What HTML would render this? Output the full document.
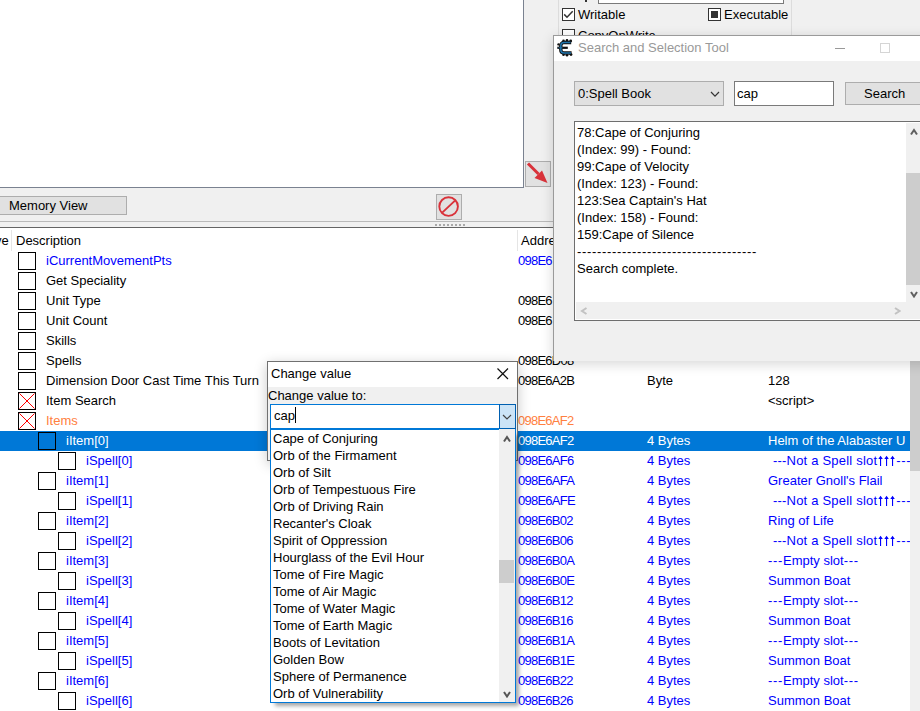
<!DOCTYPE html><html><head><meta charset="utf-8"><style>
*{margin:0;padding:0;box-sizing:border-box}
html,body{width:920px;height:711px;overflow:hidden;background:#f0f0f0;font-family:"Liberation Sans",sans-serif;font-size:13px;color:#000}
.a{position:absolute}
.t{position:absolute;white-space:nowrap;line-height:20px;height:20px}
.l{position:absolute;white-space:nowrap;line-height:17px;height:17px}
.cb{position:absolute;width:18px;height:18px;border:1px solid #000;background:#fff}
.bl{color:#0000ff}
.btn{position:absolute;background:#e1e1e1;border:1px solid #adadad}
</style></head><body>
<div class="a" style="left:0;top:0;width:524px;height:188px;background:#fff;border-right:1px solid #7a8290;border-bottom:1px solid #7a8290"></div>
<div class="btn" style="left:525px;top:161px;width:26px;height:26px"><svg class="a" style="left:0;top:0" width="24" height="24" viewBox="0 0 24 24"><path d="M2 1.5 L12.5 12" stroke="#d9323a" stroke-width="3"/><path d="M8.5 16 L16 8.5 L21.5 21 Z" fill="#d9323a"/></svg></div>
<div class="btn" style="left:-2px;top:196px;width:129px;height:19px"></div>
<div class="t" style="left:9px;top:196px">Memory View</div>
<div class="btn" style="left:436px;top:194px;width:26px;height:26px"><svg class="a" style="left:0;top:0" width="24" height="24" viewBox="0 0 24 24"><circle cx="11.6" cy="11.6" r="9.3" fill="none" stroke="#d9323a" stroke-width="1.9"/><path d="M5.2 17.6 L18 5.6" stroke="#d9323a" stroke-width="1.9"/></svg></div>
<div class="a" style="left:0;top:221px;width:554px;height:1px;background:#b9b9b9"></div>
<div class="a" style="left:435px;top:224px;width:30px;height:2px;background:repeating-linear-gradient(90deg,#a8a8a8 0 2px,transparent 2px 4px)"></div>
<div class="a" style="left:0;top:227px;width:920px;height:1px;background:#646464"></div>
<div class="a" style="left:0;top:228px;width:920px;height:483px;background:#fff"></div>
<div class="a" style="left:11px;top:230px;width:1px;height:21px;background:#e5e5e5"></div>
<div class="a" style="left:517px;top:230px;width:1px;height:21px;background:#e5e5e5"></div>
<div class="t" style="left:-5px;top:231px">ve</div>
<div class="t" style="left:16px;top:231px">Description</div>
<div class="t" style="left:521px;top:231px">Address</div>
<div class="cb" style="left:18px;top:252px;background:#fff"></div>
<div class="t" style="left:46px;top:251px;color:#0000ff">iCurrentMovementPts</div>
<div class="t" style="left:518px;top:251px;color:#0000ff;letter-spacing:-0.75px">098E6</div>
<div class="cb" style="left:18px;top:272px;background:#fff"></div>
<div class="t" style="left:46px;top:271px;color:#000">Get Speciality</div>
<div class="cb" style="left:18px;top:292px;background:#fff"></div>
<div class="t" style="left:46px;top:291px;color:#000">Unit Type</div>
<div class="t" style="left:518px;top:291px;color:#000;letter-spacing:-0.75px">098E6</div>
<div class="cb" style="left:18px;top:312px;background:#fff"></div>
<div class="t" style="left:46px;top:311px;color:#000">Unit Count</div>
<div class="t" style="left:518px;top:311px;color:#000;letter-spacing:-0.75px">098E6</div>
<div class="cb" style="left:18px;top:332px;background:#fff"></div>
<div class="t" style="left:46px;top:331px;color:#000">Skills</div>
<div class="cb" style="left:18px;top:352px;background:#fff"></div>
<div class="t" style="left:46px;top:351px;color:#000">Spells</div>
<div class="t" style="left:518px;top:351px;color:#000;letter-spacing:-0.75px">098E6D08</div>
<div class="cb" style="left:18px;top:372px;background:#fff"></div>
<div class="t" style="left:46px;top:371px;color:#000">Dimension Door Cast Time This Turn</div>
<div class="t" style="left:518px;top:371px;color:#000;letter-spacing:-0.75px">098E6A2B</div>
<div class="t" style="left:647px;top:371px;color:#000">Byte</div>
<div class="t" style="left:768px;top:371px;color:#000">128</div>
<div class="cb" style="left:18px;top:392px;background:#fff"><svg class="a" style="left:0;top:0" width="16" height="16"><path d="M0.5 0.5 L15.5 15.5 M15.5 0.5 L0.5 15.5" stroke="#ff0000" stroke-width="1"/></svg></div>
<div class="t" style="left:46px;top:391px;color:#000">Item Search</div>
<div class="t" style="left:768px;top:391px;color:#000">&lt;script&gt;</div>
<div class="cb" style="left:18px;top:412px;background:#fff"><svg class="a" style="left:0;top:0" width="16" height="16"><path d="M0.5 0.5 L15.5 15.5 M15.5 0.5 L0.5 15.5" stroke="#ff0000" stroke-width="1"/></svg></div>
<div class="t" style="left:46px;top:411px;color:#ff8040">Items</div>
<div class="t" style="left:518px;top:411px;color:#ff8040;letter-spacing:-0.75px">098E6AF2</div>
<div class="a" style="left:0;top:431px;width:910px;height:20px;background:#0078d7"></div>
<div class="cb" style="left:38px;top:432px;background:#0078d7"></div>
<div class="t" style="left:66px;top:431px;color:#fff">iItem[0]</div>
<div class="t" style="left:518px;top:431px;color:#fff;letter-spacing:-0.75px">098E6AF2</div>
<div class="t" style="left:647px;top:431px;color:#fff">4 Bytes</div>
<div class="t" style="left:768px;top:431px;color:#fff">Helm of the Alabaster U</div>
<div class="cb" style="left:58px;top:452px;background:#fff"></div>
<div class="t" style="left:86px;top:451px;color:#0000ff">iSpell[0]</div>
<div class="t" style="left:518px;top:451px;color:#0000ff;letter-spacing:-0.75px">098E6AF6</div>
<div class="t" style="left:647px;top:451px;color:#0000ff">4 Bytes</div>
<div class="t" style="left:773px;top:451px;color:#0000ff"><span style="letter-spacing:0.2px">---Not a Spell slot</span><svg style="display:inline-block;vertical-align:top;margin-top:4px" width="19" height="12" viewBox="0 0 19 12"><g fill="#0000ff" stroke="none"><rect x="3" y="2" width="1.1" height="9"/><rect x="9" y="2" width="1.1" height="9"/><rect x="15" y="2" width="1.1" height="9"/><path d="M1.3 4 L3.55 0.8 L5.8 4 Z M7.3 4 L9.55 0.8 L11.8 4 Z M13.3 4 L15.55 0.8 L17.8 4 Z"/></g></svg><span style="letter-spacing:0.67px">---</span></div>
<div class="cb" style="left:38px;top:472px;background:#fff"></div>
<div class="t" style="left:66px;top:471px;color:#0000ff">iItem[1]</div>
<div class="t" style="left:518px;top:471px;color:#0000ff;letter-spacing:-0.75px">098E6AFA</div>
<div class="t" style="left:647px;top:471px;color:#0000ff">4 Bytes</div>
<div class="t" style="left:768px;top:471px;color:#0000ff">Greater Gnoll's Flail</div>
<div class="cb" style="left:58px;top:492px;background:#fff"></div>
<div class="t" style="left:86px;top:491px;color:#0000ff">iSpell[1]</div>
<div class="t" style="left:518px;top:491px;color:#0000ff;letter-spacing:-0.75px">098E6AFE</div>
<div class="t" style="left:647px;top:491px;color:#0000ff">4 Bytes</div>
<div class="t" style="left:773px;top:491px;color:#0000ff"><span style="letter-spacing:0.2px">---Not a Spell slot</span><svg style="display:inline-block;vertical-align:top;margin-top:4px" width="19" height="12" viewBox="0 0 19 12"><g fill="#0000ff" stroke="none"><rect x="3" y="2" width="1.1" height="9"/><rect x="9" y="2" width="1.1" height="9"/><rect x="15" y="2" width="1.1" height="9"/><path d="M1.3 4 L3.55 0.8 L5.8 4 Z M7.3 4 L9.55 0.8 L11.8 4 Z M13.3 4 L15.55 0.8 L17.8 4 Z"/></g></svg><span style="letter-spacing:0.67px">---</span></div>
<div class="cb" style="left:38px;top:512px;background:#fff"></div>
<div class="t" style="left:66px;top:511px;color:#0000ff">iItem[2]</div>
<div class="t" style="left:518px;top:511px;color:#0000ff;letter-spacing:-0.75px">098E6B02</div>
<div class="t" style="left:647px;top:511px;color:#0000ff">4 Bytes</div>
<div class="t" style="left:768px;top:511px;color:#0000ff">Ring of Life</div>
<div class="cb" style="left:58px;top:532px;background:#fff"></div>
<div class="t" style="left:86px;top:531px;color:#0000ff">iSpell[2]</div>
<div class="t" style="left:518px;top:531px;color:#0000ff;letter-spacing:-0.75px">098E6B06</div>
<div class="t" style="left:647px;top:531px;color:#0000ff">4 Bytes</div>
<div class="t" style="left:773px;top:531px;color:#0000ff"><span style="letter-spacing:0.2px">---Not a Spell slot</span><svg style="display:inline-block;vertical-align:top;margin-top:4px" width="19" height="12" viewBox="0 0 19 12"><g fill="#0000ff" stroke="none"><rect x="3" y="2" width="1.1" height="9"/><rect x="9" y="2" width="1.1" height="9"/><rect x="15" y="2" width="1.1" height="9"/><path d="M1.3 4 L3.55 0.8 L5.8 4 Z M7.3 4 L9.55 0.8 L11.8 4 Z M13.3 4 L15.55 0.8 L17.8 4 Z"/></g></svg><span style="letter-spacing:0.67px">---</span></div>
<div class="cb" style="left:38px;top:552px;background:#fff"></div>
<div class="t" style="left:66px;top:551px;color:#0000ff">iItem[3]</div>
<div class="t" style="left:518px;top:551px;color:#0000ff;letter-spacing:-0.75px">098E6B0A</div>
<div class="t" style="left:647px;top:551px;color:#0000ff">4 Bytes</div>
<div class="t" style="left:768px;top:551px;color:#0000ff"><span style="letter-spacing:0.67px">---</span>Empty slot<span style="letter-spacing:0.67px">---</span></div>
<div class="cb" style="left:58px;top:572px;background:#fff"></div>
<div class="t" style="left:86px;top:571px;color:#0000ff">iSpell[3]</div>
<div class="t" style="left:518px;top:571px;color:#0000ff;letter-spacing:-0.75px">098E6B0E</div>
<div class="t" style="left:647px;top:571px;color:#0000ff">4 Bytes</div>
<div class="t" style="left:768px;top:571px;color:#0000ff">Summon Boat</div>
<div class="cb" style="left:38px;top:592px;background:#fff"></div>
<div class="t" style="left:66px;top:591px;color:#0000ff">iItem[4]</div>
<div class="t" style="left:518px;top:591px;color:#0000ff;letter-spacing:-0.75px">098E6B12</div>
<div class="t" style="left:647px;top:591px;color:#0000ff">4 Bytes</div>
<div class="t" style="left:768px;top:591px;color:#0000ff"><span style="letter-spacing:0.67px">---</span>Empty slot<span style="letter-spacing:0.67px">---</span></div>
<div class="cb" style="left:58px;top:612px;background:#fff"></div>
<div class="t" style="left:86px;top:611px;color:#0000ff">iSpell[4]</div>
<div class="t" style="left:518px;top:611px;color:#0000ff;letter-spacing:-0.75px">098E6B16</div>
<div class="t" style="left:647px;top:611px;color:#0000ff">4 Bytes</div>
<div class="t" style="left:768px;top:611px;color:#0000ff">Summon Boat</div>
<div class="cb" style="left:38px;top:632px;background:#fff"></div>
<div class="t" style="left:66px;top:631px;color:#0000ff">iItem[5]</div>
<div class="t" style="left:518px;top:631px;color:#0000ff;letter-spacing:-0.75px">098E6B1A</div>
<div class="t" style="left:647px;top:631px;color:#0000ff">4 Bytes</div>
<div class="t" style="left:768px;top:631px;color:#0000ff"><span style="letter-spacing:0.67px">---</span>Empty slot<span style="letter-spacing:0.67px">---</span></div>
<div class="cb" style="left:58px;top:652px;background:#fff"></div>
<div class="t" style="left:86px;top:651px;color:#0000ff">iSpell[5]</div>
<div class="t" style="left:518px;top:651px;color:#0000ff;letter-spacing:-0.75px">098E6B1E</div>
<div class="t" style="left:647px;top:651px;color:#0000ff">4 Bytes</div>
<div class="t" style="left:768px;top:651px;color:#0000ff">Summon Boat</div>
<div class="cb" style="left:38px;top:672px;background:#fff"></div>
<div class="t" style="left:66px;top:671px;color:#0000ff">iItem[6]</div>
<div class="t" style="left:518px;top:671px;color:#0000ff;letter-spacing:-0.75px">098E6B22</div>
<div class="t" style="left:647px;top:671px;color:#0000ff">4 Bytes</div>
<div class="t" style="left:768px;top:671px;color:#0000ff"><span style="letter-spacing:0.67px">---</span>Empty slot<span style="letter-spacing:0.67px">---</span></div>
<div class="cb" style="left:58px;top:692px;background:#fff"></div>
<div class="t" style="left:86px;top:691px;color:#0000ff">iSpell[6]</div>
<div class="t" style="left:518px;top:691px;color:#0000ff;letter-spacing:-0.75px">098E6B26</div>
<div class="t" style="left:647px;top:691px;color:#0000ff">4 Bytes</div>
<div class="t" style="left:768px;top:691px;color:#0000ff">Summon Boat</div>
<div class="a" style="left:910px;top:361px;width:10px;height:350px;background:#f0f0f0"></div>
<div class="a" style="left:910px;top:361px;width:10px;height:110px;background:#cdcdcd"></div>
<div class="a" style="left:554px;top:0;width:366px;height:36px;background:#f0f0f0"></div>
<div class="a" style="left:558px;top:0;width:1px;height:36px;background:#dcdcdc"></div>
<div class="a" style="left:791px;top:0;width:1px;height:36px;background:#dcdcdc"></div>
<div class="a" style="left:598px;top:-10px;width:186px;height:14px;background:#fff;border:1px solid #7a7a7a"></div>
<div class="a" style="left:562px;top:8px;width:13px;height:13px;border:1px solid #333;background:#fff"><svg class="a" style="left:0;top:0" width="11" height="11"><path d="M1.2 5.4 L4 8.2 L9.7 2.3" stroke="#333" fill="none" stroke-width="1.5"/></svg></div>
<div class="t" style="left:578px;top:5px">Writable</div>
<div class="a" style="left:585px;top:0;width:2px;height:1.5px;background:#333"></div>
<div class="a" style="left:708px;top:8px;width:13px;height:13px;border:1px solid #333;background:#fff"><div class="a" style="left:2px;top:2px;width:7px;height:7px;background:#333"></div></div>
<div class="t" style="left:724px;top:5px">Executable</div>
<div class="a" style="left:562px;top:29px;width:13px;height:13px;border:1px solid #333;background:#fff"></div>
<div class="t" style="left:578px;top:26px">CopyOnWrite</div>
<div class="a" style="left:553px;top:35px;width:400px;height:326px;background:#f0f0f0;border:1px solid #9a9a9a;border-bottom:none;box-shadow:0 3px 12px rgba(0,0,0,0.16)"></div>
<div class="a" style="left:554px;top:36px;width:400px;height:25px;background:#fff"></div>
<div class="t" style="left:578px;top:38px;color:#999">Search and Selection Tool</div>
<div class="a" style="left:835px;top:48px;width:10px;height:1px;background:#999"></div>
<div class="a" style="left:880px;top:43px;width:10px;height:10px;border:1px solid #d5d5d5"></div>
<svg class="a" style="left:554px;top:37px" width="22" height="22" viewBox="0 0 22 22"><g fill="none" stroke="#111" stroke-linecap="butt"><path stroke-width="3.4" d="M17.2 5.5 H10 C8 5.5,6.8 6.8,6.8 8.5 V12.8 C6.8 14.8,8 16,10 16 H17.6"/><path stroke-width="2.2" d="M3.3 10.8 H13.8"/></g><g fill="#111"><circle cx="9.5" cy="3.9" r="1.3"/><circle cx="13" cy="3.4" r="1.3"/><circle cx="16.7" cy="4" r="1.4"/><circle cx="4.5" cy="7.4" r="1.2"/><circle cx="9.5" cy="17.8" r="1.3"/><circle cx="13" cy="18.3" r="1.3"/><circle cx="17" cy="17.6" r="1.4"/></g><g fill="none" stroke="#1f74ad"><path stroke-width="1.5" d="M16.5 5.5 H10 C8 5.5,6.8 6.8,6.8 8.5 V12.8 C6.8 14.8,8 16,10 16 H17"/><path stroke-width="0.9" d="M4.5 10.8 H8.5"/></g></svg>
<div class="btn" style="left:574px;top:81px;width:150px;height:25px"></div>
<div class="t" style="left:578px;top:84px">0:Spell Book</div>
<svg class="a" style="left:709px;top:89.5px" width="12" height="8.200000000000003"><path d="M2 2 L6.0 6.200000000000003 L10 2" stroke="#333" fill="none" stroke-width="1.2"/></svg>
<div class="a" style="left:734px;top:81px;width:100px;height:25px;background:#fff;border:1px solid #7a7a7a"></div>
<div class="t" style="left:737px;top:84px">cap</div>
<div class="btn" style="left:845px;top:82px;width:100px;height:23px"></div>
<div class="t" style="left:864px;top:84px">Search</div>
<div class="a" style="left:574px;top:121px;width:360px;height:200px;background:#fff;border:1px solid #6e6e6e"></div>
<div class="l" style="left:577px;top:124px">78:Cape of Conjuring</div>
<div class="l" style="left:577px;top:141px">(Index: 99) - Found:</div>
<div class="l" style="left:577px;top:158px">99:Cape of Velocity</div>
<div class="l" style="left:577px;top:175px">(Index: 123) - Found:</div>
<div class="l" style="left:577px;top:192px">123:Sea Captain's Hat</div>
<div class="l" style="left:577px;top:209px">(Index: 158) - Found:</div>
<div class="l" style="left:577px;top:226px">159:Cape of Silence</div>
<div class="l" style="left:577px;top:243px"><span style="letter-spacing:0.67px">------------------------------------</span></div>
<div class="l" style="left:577px;top:260px">Search complete.</div>
<div class="a" style="left:906px;top:123px;width:20px;height:180px;background:#f0f0f0"></div>
<div class="a" style="left:906px;top:173px;width:14px;height:112px;background:#cdcdcd"></div>
<svg class="a" style="left:908.5px;top:128px" width="10.0" height="8.5"><path d="M2 6.5 L5.0 2 L8.0 6.5" stroke="#606060" fill="none" stroke-width="2"/></svg>
<svg class="a" style="left:908.5px;top:289.5px" width="10.0" height="8.5"><path d="M2 2 L5.0 6.5 L8.0 2" stroke="#606060" fill="none" stroke-width="2"/></svg>
<div class="a" style="left:576px;top:302px;width:350px;height:17px;background:#f0f0f0"></div>
<svg class="a" style="left:580px;top:305.5px" width="8.5" height="10.0"><path d="M6.5 2 L2 5.0 L6.5 8.0" stroke="#c2c2c2" fill="none" stroke-width="2"/></svg>
<svg class="a" style="left:892.5px;top:305.5px" width="8.5" height="10.0"><path d="M2 2 L6.5 5.0 L2 8.0" stroke="#c2c2c2" fill="none" stroke-width="2"/></svg>
<div class="a" style="left:267px;top:361px;width:251px;height:100px;background:#f0f0f0;border:1px solid #707070;box-shadow:0 3px 12px rgba(0,0,0,0.22)"></div>
<div class="a" style="left:268px;top:362px;width:249px;height:25px;background:#fff"></div>
<div class="t" style="left:271px;top:364px">Change value</div>
<svg class="a" style="left:497px;top:368px" width="12" height="12"><path d="M0.5 0.5 L11 11 M11 0.5 L0.5 11" stroke="#111" stroke-width="1.2"/></svg>
<div class="t" style="left:268px;top:386px">Change value to:</div>
<div class="a" style="left:270px;top:404px;width:246px;height:26px;background:#fff;border:1px solid #0078d7;border-bottom:2px solid #0078d7"></div>
<div class="t" style="left:274px;top:406px">cap</div>
<div class="a" style="left:295px;top:407px;width:1px;height:16px;background:#000"></div>
<div class="a" style="left:499px;top:404px;width:17px;height:25px;background:#cce4f7;border:1px solid #005fb0"></div>
<svg class="a" style="left:501px;top:412.5px" width="12" height="8.0"><path d="M2 2 L6.0 6.0 L10 2" stroke="#444" fill="none" stroke-width="1.2"/></svg>
<div class="a" style="left:270px;top:430px;width:246px;height:273px;background:#fff;border:1px solid #0078d7;border-top:none;box-shadow:4px 4px 4px -1px rgba(0,0,0,0.35)"></div>
<div class="l" style="left:273px;top:430px">Cape of Conjuring</div>
<div class="l" style="left:273px;top:447px">Orb of the Firmament</div>
<div class="l" style="left:273px;top:464px">Orb of Silt</div>
<div class="l" style="left:273px;top:481px">Orb of Tempestuous Fire</div>
<div class="l" style="left:273px;top:498px">Orb of Driving Rain</div>
<div class="l" style="left:273px;top:515px">Recanter's Cloak</div>
<div class="l" style="left:273px;top:532px">Spirit of Oppression</div>
<div class="l" style="left:273px;top:549px">Hourglass of the Evil Hour</div>
<div class="l" style="left:273px;top:566px">Tome of Fire Magic</div>
<div class="l" style="left:273px;top:583px">Tome of Air Magic</div>
<div class="l" style="left:273px;top:600px">Tome of Water Magic</div>
<div class="l" style="left:273px;top:617px">Tome of Earth Magic</div>
<div class="l" style="left:273px;top:634px">Boots of Levitation</div>
<div class="l" style="left:273px;top:651px">Golden Bow</div>
<div class="l" style="left:273px;top:668px">Sphere of Permanence</div>
<div class="l" style="left:273px;top:685px">Orb of Vulnerability</div>
<div class="a" style="left:499px;top:429px;width:16px;height:273px;background:#f0f0f0"></div>
<div class="a" style="left:499px;top:560px;width:15px;height:23px;background:#cdcdcd"></div>
<svg class="a" style="left:501.5px;top:434.5px" width="10.0" height="8.5"><path d="M2 6.5 L5.0 2 L8.0 6.5" stroke="#555" fill="none" stroke-width="2"/></svg>
<svg class="a" style="left:501.5px;top:689.5px" width="10.0" height="8.5"><path d="M2 2 L5.0 6.5 L8.0 2" stroke="#555" fill="none" stroke-width="2"/></svg>
</body></html>
